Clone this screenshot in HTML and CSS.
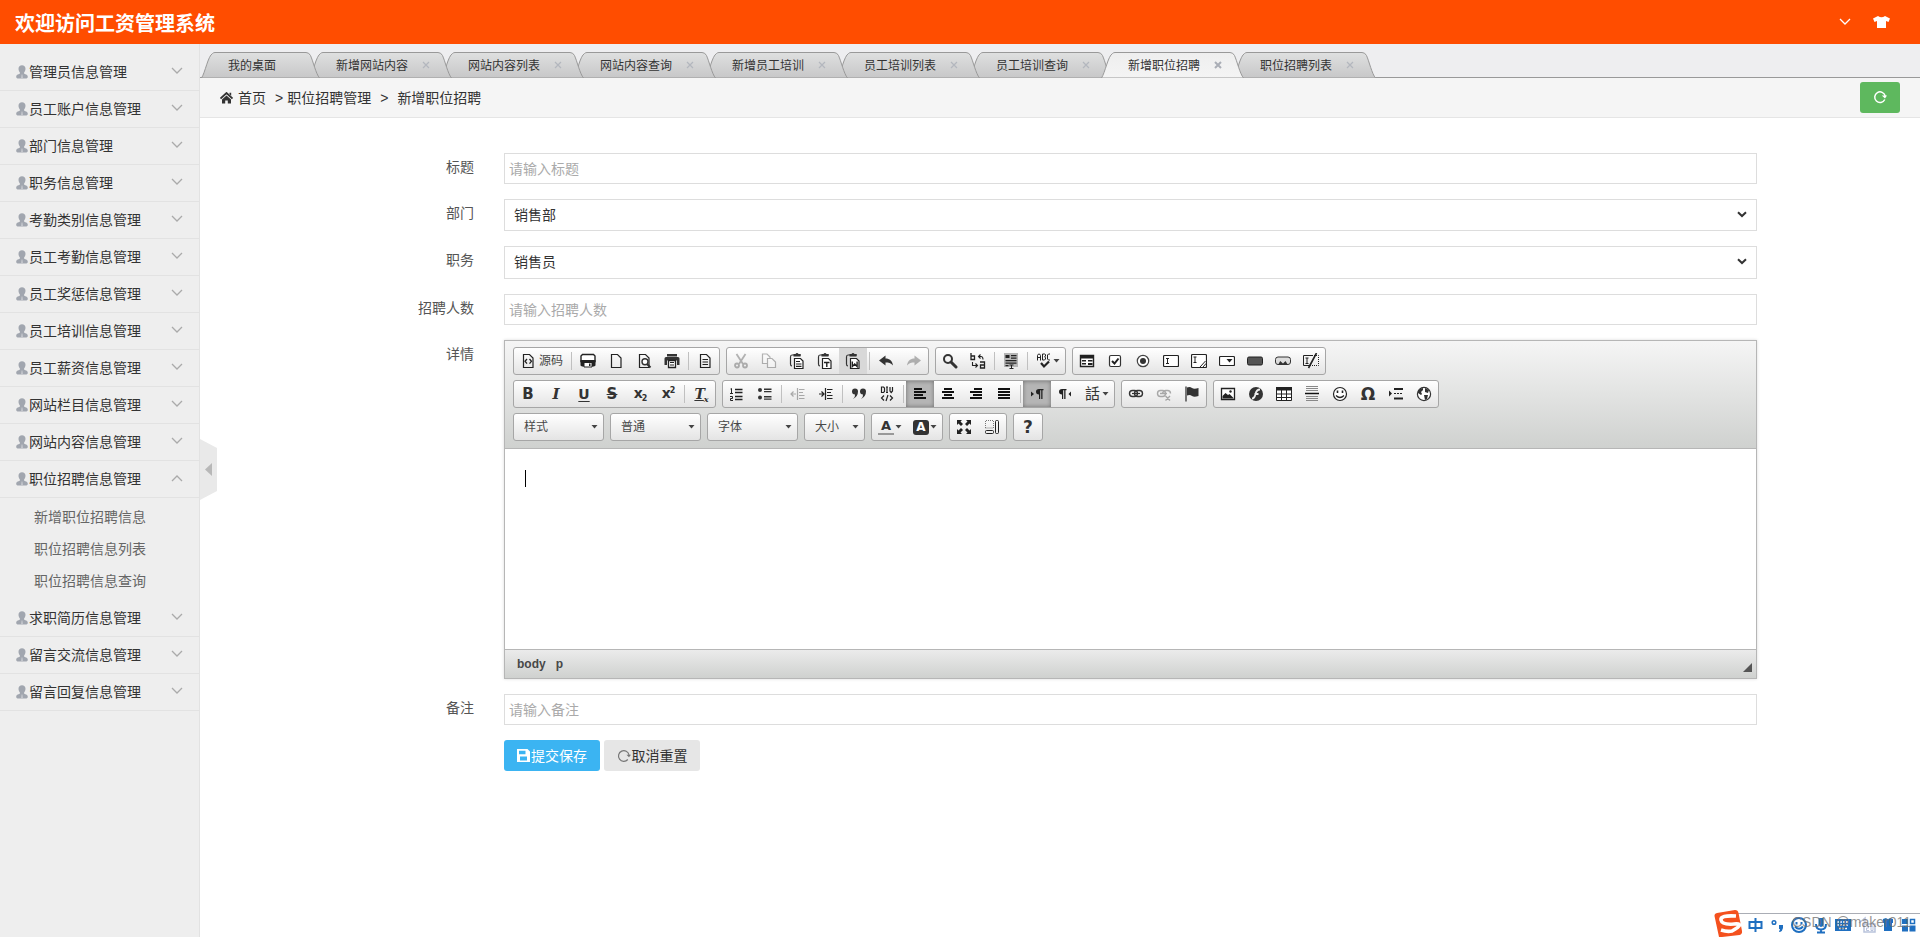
FILE: index.html
```html
<!DOCTYPE html>
<html lang="zh-CN">
<head>
<meta charset="utf-8">
<title>工资管理系统</title>
<link rel="stylesheet" href="styles.css">
</head>
<body>
<svg class="sprite" width="0" height="0">
  <symbol id="user" viewBox="0 0 12 14"><path d="M6 0.3c2.100 0 3.500 1.400 3.500 3.500 0 1.500-.6 2.800-1.400 3.600v1.200c.4.6 3.700.8 3.700 3.200 0 1-.5 1.400-1.400 1.600H1.600C.7 13.200.2 12.800.2 11.800c0-2.400 3.300-2.600 3.700-3.200V7.400C3.100 6.600 2.500 5.300 2.500 3.800 2.500 1.700 3.900.3 6 .3z" fill="#a1a6af"/><path d="M5.500 9.500h1l.5 3.500H5z" fill="#c3c6cc"/></symbol>
  <symbol id="down" viewBox="0 0 12 8"><path d="M1 1l5 5 5-5" fill="none" stroke="currentColor" stroke-width="1.300"/></symbol>
  <symbol id="up" viewBox="0 0 12 8"><path d="M1 7l5-5 5 5" fill="none" stroke="currentColor" stroke-width="1.300"/></symbol>
  <symbol id="tab" viewBox="0 0 143 26"><path d="M.5 26C4 21 7 4 11.500 1.500Q12.500.5 14 .5H129Q132 .5 133.500 3.500C136 9 139 22 142.500 26z" stroke="#999"/></symbol>
  <symbol id="caret" viewBox="0 0 7 4"><path d="M.5 0h6l-3 3.500z" fill="#444"/></symbol>
  <symbol id="page" viewBox="0 0 16 16"><path d="M3.500 1.500h6l3.500 3.500v9.500H3.500z" fill="none" stroke="#222" stroke-width="1.200"/></symbol>
  <symbol id="clip" viewBox="0 0 16 16"><path d="M5 2H3Q1.500 2 1.500 4V11q0 2 1.500 2M11 2h1" fill="none" stroke="#333" stroke-width="1.200"/><path d="M4.500 1h2q.5-1 1.500-1t1.500 1h2v2.500h-7z" fill="#333"/><path d="M5.500 5.500h6l2.500 2.500v7.500H5.500z" fill="#fff" stroke="#222" stroke-width="1.200"/></symbol>
  <symbol id="select-arrow" viewBox="0 0 10 7"><path d="M1 1.200l4 3.800 4-3.800" fill="none" stroke="#333" stroke-width="2"/></symbol>
  <linearGradient id="tab-fill" x1="0" y1="0" x2="0" y2="1"><stop offset="0" stop-color="#dfe0e0"/><stop offset="1" stop-color="#c7c7c8"/></linearGradient>
  <linearGradient id="tab-on" x1="0" y1="0" x2="0" y2="1"><stop offset="0" stop-color="#eee"/><stop offset="1" stop-color="#f4f4f4"/></linearGradient>
</svg>

<header class="header">
  <h1 class="brand">欢迎访问工资管理系统</h1>
  <div class="header-tools">
    <svg width="12" height="8"><use href="#down"/></svg>
    <svg width="17" height="12" viewBox="0 0 17 12"><path d="M5 0Q8.500 2.500 12 0L17 2.500 15.500 6 13 5V12H4V5L1.500 6 0 2.500z" fill="#fff"/></svg>
  </div>
</header>

<div class="shell">
  <nav class="sidebar">
    <a class="menu"><svg class="who"><use href="#user"/></svg><span>管理员信息管理</span><svg class="chev"><use href="#down"/></svg></a>
    <a class="menu"><svg class="who"><use href="#user"/></svg><span>员工账户信息管理</span><svg class="chev"><use href="#down"/></svg></a>
    <a class="menu"><svg class="who"><use href="#user"/></svg><span>部门信息管理</span><svg class="chev"><use href="#down"/></svg></a>
    <a class="menu"><svg class="who"><use href="#user"/></svg><span>职务信息管理</span><svg class="chev"><use href="#down"/></svg></a>
    <a class="menu"><svg class="who"><use href="#user"/></svg><span>考勤类别信息管理</span><svg class="chev"><use href="#down"/></svg></a>
    <a class="menu"><svg class="who"><use href="#user"/></svg><span>员工考勤信息管理</span><svg class="chev"><use href="#down"/></svg></a>
    <a class="menu"><svg class="who"><use href="#user"/></svg><span>员工奖惩信息管理</span><svg class="chev"><use href="#down"/></svg></a>
    <a class="menu"><svg class="who"><use href="#user"/></svg><span>员工培训信息管理</span><svg class="chev"><use href="#down"/></svg></a>
    <a class="menu"><svg class="who"><use href="#user"/></svg><span>员工薪资信息管理</span><svg class="chev"><use href="#down"/></svg></a>
    <a class="menu"><svg class="who"><use href="#user"/></svg><span>网站栏目信息管理</span><svg class="chev"><use href="#down"/></svg></a>
    <a class="menu"><svg class="who"><use href="#user"/></svg><span>网站内容信息管理</span><svg class="chev"><use href="#down"/></svg></a>
    <a class="menu"><svg class="who"><use href="#user"/></svg><span>职位招聘信息管理</span><svg class="chev"><use href="#up"/></svg></a>
    <div class="submenu">
      <a>新增职位招聘信息</a>
      <a>职位招聘信息列表</a>
      <a>职位招聘信息查询</a>
    </div>
    <a class="menu"><svg class="who"><use href="#user"/></svg><span>求职简历信息管理</span><svg class="chev"><use href="#down"/></svg></a>
    <a class="menu"><svg class="who"><use href="#user"/></svg><span>留言交流信息管理</span><svg class="chev"><use href="#down"/></svg></a>
    <a class="menu"><svg class="who"><use href="#user"/></svg><span>留言回复信息管理</span><svg class="chev"><use href="#down"/></svg></a>
    <svg class="collapse" width="17" height="62" viewBox="0 0 17 62"><path d="M0 0l17 9v43L0 61z" fill="#e9e9e9"/><path d="M12 24v13l-7-6.500z" fill="#b8b8b8"/></svg>
  </nav>

  <main class="main">
    <div class="tabs">
      <div class="tab first"><svg class="shape" viewBox="0 0 119 26"><path d="M.5 26C4 21 7 4 11.500 1.500Q12.500.5 14 .5H105Q108 .5 109.500 3.500C112 9 115 22 118.500 26z" stroke="#999"/></svg><span>我的桌面</span></div>
      <div class="tab"><svg class="shape"><use href="#tab"/></svg><span>新增网站内容</span><svg class="close" viewBox="0 0 8 8"><path d="M1 1l6 6M7 1L1 7"/></svg></div>
      <div class="tab"><svg class="shape"><use href="#tab"/></svg><span>网站内容列表</span><svg class="close" viewBox="0 0 8 8"><path d="M1 1l6 6M7 1L1 7"/></svg></div>
      <div class="tab"><svg class="shape"><use href="#tab"/></svg><span>网站内容查询</span><svg class="close" viewBox="0 0 8 8"><path d="M1 1l6 6M7 1L1 7"/></svg></div>
      <div class="tab"><svg class="shape"><use href="#tab"/></svg><span>新增员工培训</span><svg class="close" viewBox="0 0 8 8"><path d="M1 1l6 6M7 1L1 7"/></svg></div>
      <div class="tab"><svg class="shape"><use href="#tab"/></svg><span>员工培训列表</span><svg class="close" viewBox="0 0 8 8"><path d="M1 1l6 6M7 1L1 7"/></svg></div>
      <div class="tab"><svg class="shape"><use href="#tab"/></svg><span>员工培训查询</span><svg class="close" viewBox="0 0 8 8"><path d="M1 1l6 6M7 1L1 7"/></svg></div>
      <div class="tab active"><svg class="shape"><use href="#tab"/></svg><span>新增职位招聘</span><svg class="close" viewBox="0 0 8 8"><path d="M1 1l6 6M7 1L1 7"/></svg></div>
      <div class="tab"><svg class="shape"><use href="#tab"/></svg><span>职位招聘列表</span><svg class="close" viewBox="0 0 8 8"><path d="M1 1l6 6M7 1L1 7"/></svg></div>
    </div>

    <div class="crumbs">
      <svg width="13" height="12" viewBox="0 0 13 12"><path d="M.5 6.500L6.500 1l6 5.500" fill="none" stroke="#333" stroke-width="1.800"/><path d="M6.500 3.500L2 7.500V11.500H5.200V8.500h2.600v3H11V7.500z" fill="#333"/><path d="M9.500.8h1.700v3L9.500 2.300z" fill="#333"/></svg>
      <span class="c1">首页</span><span class="gt g1">&gt;</span><span>职位招聘管理</span><span class="gt g2">&gt;</span><span>新增职位招聘</span>
      <button class="refresh"><svg width="14" height="14" viewBox="0 0 14 14"><path d="M11.800 9.500A5.300 5.300 0 1 1 12.200 6" fill="none" stroke="#fff" stroke-width="1.500"/><path d="M8.800 5.500H14L12 8.500z" fill="#fff"/></svg></button>
    </div>

    <form class="form">
      <label>标题</label><input class="field" placeholder="请输入标题">
      <label>部门</label><div class="field choose"><span>销售部</span><svg width="10" height="7"><use href="#select-arrow"/></svg></div>
      <label>职务</label><div class="field choose tall"><span>销售员</span><svg width="10" height="7"><use href="#select-arrow"/></svg></div>
      <label>招聘人数</label><input class="field" placeholder="请输入招聘人数">
      <label>详情</label>
      <div class="editor">
        <div class="toolbar">
          <div class="row">
            <div class="group">
              <a class="btn source"><svg viewBox="0 0 16 16"><use href="#page"/><path d="M7 6L5 8.300 7 10.600M9.500 6l2 2.300-2 2.300" fill="none" stroke="#222" stroke-width="1.300"/></svg><span>源码</span></a><i class="sep"></i>
              <a class="btn"><svg viewBox="0 0 16 16"><path d="M2.500 1.500h11l1.500 1.500V8.500H1V3z" fill="#fff" stroke="#222" stroke-width="1.400"/><path d="M.5 7h15v5.500l-1.500 1H2l-1.500-1z" fill="#222"/><path d="M4 9.500h8v4.500H4z" fill="#fff" stroke="#222"/><path d="M9 10.500h1.500v2.500H9z" fill="#222"/></svg></a>
              <a class="btn"><svg viewBox="0 0 16 16"><use href="#page"/></svg></a>
              <a class="btn"><svg viewBox="0 0 16 16"><use href="#page"/><circle cx="9" cy="8.800" r="3" fill="#fff" stroke="#333" stroke-width="1.400"/><path d="M11 11l3.500 3.500" stroke="#333" stroke-width="2"/></svg></a>
              <a class="btn"><svg viewBox="0 0 16 16"><path d="M3 1h10v2.500H3zM2 4h12q1.500 0 1.500 1.500V12H13V7.500H3V12H.5V5.500Q.5 4 2 4z" fill="#333"/><path d="M4.500 7.500h7v7h-7z" fill="#fff" stroke="#222" stroke-width="1.300"/><path d="M6 9.500h4M6 12h4" stroke="#222"/></svg></a><i class="sep"></i>
              <a class="btn"><svg viewBox="0 0 16 16"><use href="#page"/><path d="M5.500 6.500H11M5.500 9H11M5.500 11.500H11" stroke="#222" stroke-width="1.200"/></svg></a>
            </div>
            <div class="group">
              <a class="btn off"><svg viewBox="0 0 16 16" fill="none" stroke="#333" stroke-width="1.800"><path d="M3.500 1l6.500 10M12.500 1L6 11"/><circle cx="4" cy="12.500" r="2"/><circle cx="12" cy="12.500" r="2"/></svg></a>
              <a class="btn off"><svg viewBox="0 0 16 16" fill="#fff" stroke="#333" stroke-width="1.200"><path d="M1.500 1H6l3 3v6.500H1.500z"/><path d="M6.500 5.500H11l3.500 3.500v5.500h-8z"/></svg></a>
              <a class="btn"><svg viewBox="0 0 16 16"><use href="#clip"/><path d="M7 8.500h4M7 11h5.500M7 13.300h5.500" stroke="#222" stroke-width="1.200"/></svg></a>
              <a class="btn"><svg viewBox="0 0 16 16"><use href="#clip"/><path d="M7 9.500h5.500M9.800 9.500V14" stroke="#222" stroke-width="1.400"/></svg></a>
              <a class="btn hover"><svg viewBox="0 0 16 16"><use href="#clip"/><path d="M7.300 8.500v5l2.400-2.500 2.400 2.500v-5" fill="none" stroke="#222" stroke-width="1.400"/></svg></a><i class="sep"></i>
              <a class="btn"><svg viewBox="0 0 16 16"><path d="M1 7.500L7.500 2.500V5.500c4 0 7 2.500 7.500 7C13 10 10.500 9.500 7.500 9.500v3z" fill="#333"/></svg></a>
              <a class="btn off"><svg viewBox="0 0 16 16"><path d="M15 7.500L8.500 2.500V5.500c-4 0-7 2.500-7.500 7C3 10 5.500 9.500 8.500 9.500v3z" fill="#333"/></svg></a>
            </div>
            <div class="group">
              <a class="btn"><svg viewBox="0 0 16 16"><circle cx="6" cy="6" r="4" fill="none" stroke="#333" stroke-width="2"/><path d="M9 9l5 5" stroke="#333" stroke-width="3" stroke-linecap="round"/></svg></a>
              <a class="btn"><svg viewBox="0 0 16 16" fill="none" stroke="#222" stroke-width="1.300"><path d="M1 0v6.500H4.500V3H1M10 9h4.500v6H10.500v-3h4"/><path d="M8.500 3.500h2.500q2 0 2 3M10.500 1.500L8.500 3.500l2 2M2.500 9v3.500H7M5.500 10.500l2 2-2 2" stroke-width="1.100"/></svg></a><i class="sep"></i>
              <a class="btn"><svg viewBox="0 0 16 16"><path d="M1 0h14v14H1z" fill="#b5b5b5"/><path d="M2.500 2h4v3h-4zM8 2h5.500v1.200H8zM8 4.500h5.500v1.200H8zM2.500 7h11v1.200h-11zM2.500 9.500h11v1.200h-11zM2.500 12h3v1.200h-3z" fill="#222"/><path d="M8.500 12v3.500M6.500 12h4M6.500 15.500h4" stroke="#222"/></svg></a><i class="sep"></i>
              <a class="btn wide"><svg viewBox="0 0 16 16" fill="none" stroke="#222"><path d="M1.500 7.500v-5l1-1.500h1l1 1.500v5M1.500 4.500h3M6.500 1v6h2l1-1V4.500L8.500 4l1-1V1.500L8.500 1zM14 1h-1.500l-1 1v4l1 1H14"/><path d="M5 10l3 3.500L13 8.500" stroke-width="2.200"/></svg><svg class="caret"><use href="#caret"/></svg></a>
            </div>
            <div class="group">
              <a class="btn"><svg viewBox="0 0 16 16"><path d="M1.500 2.500h13v11h-13z" fill="#fff" stroke="#222" stroke-width="1.400"/><path d="M1 2h14v3.500H1zM3 7h4v1.500H3zM3 10h4v1.500H3zM9 7h4.500v1.500H9zM9 10h4.500v2H9z" fill="#222"/></svg></a>
              <a class="btn"><svg viewBox="0 0 16 16"><rect x="2.500" y="2.500" width="11" height="11" rx="1.500" fill="#fff" stroke="#333" stroke-width="1.200"/><path d="M5 8l2.500 2.500L11.500 5.500" fill="none" stroke="#222" stroke-width="2"/></svg></a>
              <a class="btn"><svg viewBox="0 0 16 16"><circle cx="8" cy="8" r="5.700" fill="#fff" stroke="#444" stroke-width="1.200"/><circle cx="8" cy="8" r="3" fill="#333"/></svg></a>
              <a class="btn"><svg viewBox="0 0 16 16"><rect x=".5" y="2.500" width="15" height="11" rx="1" fill="#fff" stroke="#222" stroke-width="1.200"/><path d="M3 5.500h3M4.500 5.500v5M3 10.500h3" stroke="#222"/></svg></a>
              <a class="btn"><svg viewBox="0 0 16 16"><rect x=".5" y="1.500" width="15" height="13" rx="1" fill="#fff" stroke="#222" stroke-width="1.200"/><path d="M2.500 4h3M4 4v5.500M2.500 9.500h3M9 14l5.500-6M12 14l3-3.500" stroke="#222"/></svg></a>
              <a class="btn"><svg viewBox="0 0 16 16"><rect x=".5" y="3.500" width="15" height="9" rx="1" fill="#fff" stroke="#222" stroke-width="1.200"/><path d="M7.500 6h6l-3 3.500z" fill="#222"/></svg></a>
              <a class="btn"><svg viewBox="0 0 16 16"><rect x=".5" y="4" width="15" height="8" rx="1.500" fill="#555" stroke="#222"/></svg></a>
              <a class="btn"><svg viewBox="0 0 16 16"><rect x=".5" y="4" width="15" height="7.500" rx="2.500" fill="#ddd" stroke="#333"/><path d="M3 12l2.200-4L8 10.500 10.500 8l2.500 4z" fill="#333"/></svg></a>
              <a class="btn"><svg viewBox="0 0 16 16" fill="none" stroke="#222"><path d="M9 2.500H.5v10H7"/><path d="M9 2.500h6.500v10H7" stroke-dasharray="1 1"/><path d="M2.500 5h3M4 5v5.500M2.500 10.500h3"/><path d="M13.500 0L5.500 15" stroke-width="1.600"/></svg></a>
            </div>
          </div>
          <div class="row">
            <div class="group">
              <a class="btn"><b class="glyph">B</b></a><a class="btn"><b class="glyph ital">I</b></a><a class="btn"><b class="glyph under">U</b></a><a class="btn"><b class="glyph strike">S</b></a>
              <a class="btn"><b class="glyph x">x<small class="low">2</small></b></a><a class="btn"><b class="glyph x">x<small class="high">2</small></b></a><i class="sep"></i>
              <a class="btn"><b class="glyph ital tx">T<small class="low">x</small></b></a>
            </div>
            <div class="group">
              <a class="btn"><svg viewBox="0 0 16 16" fill="none" stroke="#222"><path d="M1.500 3l1-.5v5M1 7.500h3M1 10.500h2.500v2H1.500v2H4"/><path d="M6 3.500h7.500M6 6.500h7.500M6 10.500h7.500M6 13.500h7.500" stroke-width="1.400"/></svg></a>
              <a class="btn"><svg viewBox="0 0 16 16" fill="#333"><circle cx="3" cy="4" r="2"/><circle cx="3" cy="11.500" r="2"/><path d="M7 2.500h7.500V4H7zM7 5h7.500v1.200H7zM7 10h7.500v1.400H7zM7 12.500h7.500v1.200H7z"/></svg></a><i class="sep"></i>
              <a class="btn off"><svg viewBox="0 0 16 16" fill="none" stroke="#222"><path d="M7.500 2v12M9 3.500h5.500M9 6.500h4M9 9.500h5.500M9 12.500h5.500M1 8h5M3.500 5.500L1 8l2.500 2.500" stroke-width="1.200"/></svg></a>
              <a class="btn"><svg viewBox="0 0 16 16" fill="none" stroke="#222"><path d="M7.500 2v12M9 3.500h5.500M9 6.500h4M9 9.500h5.500M9 12.500h5.500M1 8h5M3.500 5.500L6 8 3.500 10.500" stroke-width="1.200"/></svg></a><i class="sep"></i>
              <a class="btn"><svg viewBox="0 0 16 16" fill="#333"><path d="M1 5.500a3 3 0 0 1 6 0q0 5-5 7.500Q4.500 10.500 4 8.500 1 8.500 1 5.500zM9 5.500a3 3 0 0 1 6 0q0 5-5 7.500 2.500-2.500 2-4.500-3 0-3-3z"/></svg></a>
              <a class="btn"><svg viewBox="0 0 16 16" fill="none" stroke="#222" stroke-width="1.200"><path d="M2.500 1v5.500h2l1-1v-3.500l-1-1zM7 1h2M8 1v5.500M7 6.500h2M11 1v4l1.200 1.500L13.500 5V1M5 9.500L2.500 12 5 14.500M11 9.500l2.500 2.500-2.500 2.500M9 9L7 15"/></svg></a><i class="sep"></i>
              <a class="btn on"><svg viewBox="0 0 16 16"><path d="M2 3h8M2 6h12M2 9h9M2 12h12" stroke="#111" stroke-width="2"/></svg></a>
              <a class="btn"><svg viewBox="0 0 16 16"><path d="M4 3h8M2 6h12M4 9h8M2 12h12" stroke="#111" stroke-width="2"/></svg></a>
              <a class="btn"><svg viewBox="0 0 16 16"><path d="M6 3h8M2 6h12M5 9h9M2 12h12" stroke="#111" stroke-width="2"/></svg></a>
              <a class="btn"><svg viewBox="0 0 16 16"><path d="M2 3h12M2 6h12M2 9h12M2 12h12" stroke="#111" stroke-width="2"/></svg></a><i class="sep"></i>
              <a class="btn on"><svg viewBox="0 0 16 16"><path d="M2 5.500v5l3-2.500zM10 3h4.500v1.200h-1V13h-1.300V4.200h-1V13H10V8.500Q7 8.500 7 5.800T10 3z" fill="#222"/></svg></a>
              <a class="btn"><svg viewBox="0 0 16 16"><path d="M14 5.500v5L11.500 8zM5 3h4.500v1.200h-1V13H7.200V4.200h-1V13H5V8.500Q2 8.500 2 5.800T5 3z" fill="#222"/></svg></a>
              <a class="btn wide"><span class="lang">話</span><svg class="caret"><use href="#caret"/></svg></a>
            </div>
            <div class="group">
              <a class="btn"><svg viewBox="0 0 16 16" fill="none" stroke="#333" stroke-width="1.400"><rect x="1.500" y="4.500" width="8" height="6" rx="3"/><rect x="6.500" y="4.500" width="8" height="6" rx="3"/><path d="M4 7.500h8" stroke-width="1.200"/></svg></a>
              <a class="btn off"><svg viewBox="0 0 16 16" fill="none" stroke="#222" stroke-width="1.400"><rect x="1.500" y="4.500" width="8" height="6" rx="3"/><path d="M6.500 7q1-2.500 3-2.500h2a3 3 0 0 1 3 3M4 7.500h7M9.500 10l4.500 4.500M14 10l-4.500 4.500"/></svg></a>
              <a class="btn"><svg viewBox="0 0 16 16"><path d="M2 .5v15" stroke="#333" stroke-width="1.300"/><path d="M3 1.500q3-1 5 .5t6.500 0v8q-4.500 1.500-6.500 0t-5-.5z" fill="#333"/></svg></a>
            </div>
            <div class="group">
              <a class="btn"><svg viewBox="0 0 16 16"><path d="M1.500 2.500h13v11h-13z" fill="#fff" stroke="#222" stroke-width="1.300"/><path d="M2.500 12.500V10l3-3 2.500 2 1.500-1 4 4v.5z" fill="#222"/><circle cx="10.500" cy="5.500" r="1.200" fill="#222"/></svg></a>
              <a class="btn"><svg viewBox="0 0 16 16"><circle cx="8" cy="8" r="7" fill="#333"/><path d="M12 3.500Q8.500 3.500 7.500 8T4 12.500M6.500 8h4" fill="none" stroke="#eee" stroke-width="1.800"/></svg></a>
              <a class="btn"><svg viewBox="0 0 16 16"><path d="M.5 1.500h15v13H.5z" fill="#fff" stroke="#222"/><path d="M0 1h16v3.500H0z" fill="#222"/><path d="M5.500 4v10.500M10.500 4v10.500M.5 8h15M.5 11.500h15" stroke="#222"/></svg></a>
              <a class="btn"><svg viewBox="0 0 16 16"><path d="M2 .5h12M2 2.500h12M2 4.500h12M2 10.500h12M2 12.500h12M2 14.500h12" stroke="#888"/><path d="M1 7.500h14" stroke="#111" stroke-width="1.500"/></svg></a>
              <a class="btn"><svg viewBox="0 0 16 16"><circle cx="8" cy="8" r="6.500" fill="#fff" stroke="#222" stroke-width="1.200"/><path d="M5.500 4.500v2.500M10.500 4.500v2.500" stroke="#222" stroke-width="1.600"/><path d="M4 9.500q4 4 8 0" fill="none" stroke="#222" stroke-width="1.200"/></svg></a>
              <a class="btn"><b class="glyph omega">Ω</b></a>
              <a class="btn"><svg viewBox="0 0 16 16"><path d="M1 4.500v6L4 7.500z" fill="#222"/><path d="M6 3h9M6 12.500h9" stroke="#222" stroke-width="2"/><path d="M6 7.500h9" stroke="#222" stroke-dasharray="2 1"/></svg></a>
              <a class="btn"><svg viewBox="0 0 16 16"><circle cx="8" cy="8" r="6.600" fill="#fff" stroke="#333" stroke-width="1.200"/><path d="M2 5Q4 2 7 2v2L5 6l1 2-1 1-3-2zM9 2l4 2-1 3-3-1zM8 9l4 0-1 4-2 1z" fill="#333"/></svg></a>
            </div>
          </div>
          <div class="row">
            <a class="combo"><span>样式</span><svg class="caret"><use href="#caret"/></svg></a>
            <a class="combo"><span>普通</span><svg class="caret"><use href="#caret"/></svg></a>
            <a class="combo"><span>字体</span><svg class="caret"><use href="#caret"/></svg></a>
            <a class="combo short"><span>大小</span><svg class="caret"><use href="#caret"/></svg></a>
            <div class="group">
              <a class="btn wide"><b class="glyph tint">A</b><svg class="caret"><use href="#caret"/></svg></a>
              <a class="btn wide"><b class="glyph paint">A</b><svg class="caret"><use href="#caret"/></svg></a>
            </div>
            <div class="group">
              <a class="btn"><svg viewBox="0 0 16 16"><path d="M1 1h5L4.500 2.500 7 5 5 7 2.500 4.500 1 6zM15 1v5l-1.500-1.500L11 7 9 5l2.500-2.500L10 1zM1 15v-5l1.500 1.500L5 9l2 2-2.500 2.500L6 15zM15 15h-5l1.500-1.500L9 11l2-2 2.500 2.500L15 10z" fill="#222"/></svg></a>
              <a class="btn"><svg viewBox="0 0 16 16" fill="none" stroke="#222"><path d="M1.500 9V1.500h8V9z" stroke="#777" stroke-dasharray="1 1"/><rect x="1.500" y="11.500" width="8" height="3" rx="1"/><rect x="11.500" y="1.500" width="3" height="13" rx="1"/></svg></a>
            </div>
            <div class="group"><a class="btn"><b class="glyph ask">?</b></a></div>
          </div>
        </div>
        <div class="canvas"><i class="cursor"></i></div>
        <div class="status"><span>body</span><span>p</span><svg class="grip" width="9" height="9"><path d="M9 0v9H0z" fill="#555"/></svg></div>
      </div>
      <label>备注</label><input class="field" placeholder="请输入备注">
      <div class="actions">
        <button type="button" class="save"><svg width="13" height="13" viewBox="0 0 13 13"><path d="M0 0h10.500L13 2.500V13H0zM2 1.700v3.600h6.500V1.700zM3 7.500v4h7v-4z" fill="#fff" fill-rule="evenodd"/></svg>提交保存</button>
        <button type="button" class="reset"><svg width="14" height="14" viewBox="0 0 14 14"><path d="M10.800 10.500A5.300 5.300 0 1 1 12 6" fill="none" stroke="#777" stroke-width="1.200"/><path d="M9.500 5.800H14L12 8.300z" fill="#777"/></svg>取消重置</button>
      </div>
    </form>
  </main>
</div>

<div class="ime">
  <svg width="206" height="27" viewBox="0 0 206 27">
    <path d="M20 3.500H206V27H24z" fill="#fff"/><path d="M22 3.500H206" stroke="#aaadb5"/>
    <path d="M3 3L21 0q3 0 3.500 3L28 21q.5 3-2.500 4L8 27H5L.5 6Q.3 3.500 3 3z" fill="#f4511e"/>
    <path d="M22 6Q6 5 7 10t13 4-2 7q-5 1-11-1" fill="none" stroke="#fff" stroke-width="3.600"/>
    <g fill="none" stroke="#1f6fc0" stroke-width="2"><path d="M35.500 12h12v6h-12zM41.500 8v14"/><circle cx="60" cy="12.500" r="1.800" stroke-width="1.500"/><circle cx="85" cy="15" r="7"/><path d="M82.500 12v2.500M87.500 12v2.500M81 16.500q4 4.500 8 0M102 14q0 5.500 5 5.500t5-5.500M107 19v4M103 22.500h8"/></g>
    <path d="M65 15h4v3q-.5 3-3 4h-1l1-3h-1zM104.500 8h5v7q-2.500 4-5 0zM121 9h16v12h-16zM169 9l3-1q2 2 4 0l3 1v4h-1v8h-8v-8h-1zM188 9h6v5h-6zM188 15.500h6v6h-6zM195.500 15.500h6v6h-6z" fill="#1f6fc0"/>
    <path d="M123 12h12M123 15h12M125 18.500h8" stroke="#fff" stroke-width="1.500" stroke-dasharray="2 1"/>
    <path d="M196.500 9.500h4v4h-4z" fill="#fff" stroke="#1f6fc0" stroke-width="1.500"/>
    <path d="M145 13l6-5v5M150 14h11v8h-11z" fill="#fff" stroke="#b9c3dc" stroke-width="1.500"/>
    <path d="M152.500 16h2v2h-2v2.500h2.500M157 16h2v4.500h-2z" fill="none" stroke="#b9c3dc"/>
  </svg>
  <span class="mark">CSDN @maker011</span>
</div>
</body>
</html>
```

FILE: styles.css
```css
* { box-sizing: border-box; }
body {
  margin: 0;
  height: 937px;
  overflow: hidden;
  display: flex;
  flex-direction: column;
  background: #fff;
  color: #333;
  font: 14px/20px "Liberation Sans", "Noto Sans CJK SC", sans-serif;
}
svg { display: block; flex: none; }
.sprite { position: absolute; }

.header {
  height: 44px;
  flex: none;
  background: #ff4d00;
  color: #fff;
  display: flex;
  align-items: center;
  justify-content: space-between;
  padding: 0 30px 0 15px;
}
.brand { margin: 0; font-size: 20px; line-height: 44px; padding-top: 3px; }
.header-tools { display: flex; align-items: center; gap: 22px; }

.shell { flex: 1; display: flex; min-height: 0; }
.sidebar {
  position: relative;
  width: 200px;
  flex: none;
  padding-top: 10px;
  background: #eee;
  border-right: 1px solid #e2e2e2;
}
.menu {
  height: 37px;
  display: flex;
  align-items: center;
  padding: 0 16px 0 16px;
  border-bottom: 1px solid #e2e2e2;
}
.menu span { flex: 1; margin-left: 1px; padding-bottom: 1px; }
.who { width: 12px; height: 14px; margin-top: -1px; }
.chev { width: 12px; height: 8px; color: #aaa; margin-top: -2px; }
.submenu { padding: 3px 0 3px 34px; color: #666; }
.submenu a { display: block; line-height: 32px; }
.collapse { position: absolute; left: 200px; top: 395px; }

.main { flex: 1; min-width: 0; }
.tabs {
  height: 34px;
  display: flex;
  align-items: flex-end;
  padding-left: 1px;
  background: linear-gradient(#999, #999) bottom / 100% 1px no-repeat #eeeef0;
}
.tab {
  width: 143px;
  height: 26px;
  margin-right: -11px;
  padding-left: 27px;
  display: grid;
  grid-template-columns: 86px 8px;
  grid-template-rows: 26px;
  align-items: center;
  font-size: 12px;
  white-space: nowrap;
  isolation: isolate;
}
.tab span { grid-area: 1 / 1; padding-top: 1px; }
.tab .close { grid-area: 1 / 2; }
.tab.first { width: 119px; }
.tab .shape {
  grid-area: 1 / 1;
  z-index: -1;
  width: 143px;
  height: 26px;
  margin-left: -27px;
  fill: url(#tab-fill);
}
.tab.first .shape { width: 119px; }
.tab:nth-child(1) { z-index: 9; }
.tab:nth-child(2) { z-index: 8; }
.tab:nth-child(3) { z-index: 7; }
.tab:nth-child(4) { z-index: 6; }
.tab:nth-child(5) { z-index: 5; }
.tab:nth-child(6) { z-index: 4; }
.tab:nth-child(7) { z-index: 3; }
.tab:nth-child(9) { z-index: 1; }
.tab.active { z-index: 10; }
.tab.active .shape { fill: url(#tab-on); }
.close { width: 8px; height: 8px; stroke: #b3b7be; stroke-width: 1.2; }
.active .close { stroke-width: 2; stroke: #aaaeb6; }

.crumbs {
  height: 40px;
  display: flex;
  align-items: center;
  padding: 0 20px;
  background: #f5f5f5;
  border-bottom: 1px solid #e5e5e5;
}
.c1 { margin-left: 5px; }
.g1 { margin: 0 4px 0 9px; }
.g2 { margin: 0 9px 0 9px; }
.refresh {
  margin: -1px 0 0 auto;
  width: 40px;
  height: 31px;
  border: 0;
  border-radius: 3px;
  background: #5eb85e;
  display: grid;
  place-items: center;
}

.form {
  display: grid;
  grid-template-columns: 274px 1253px;
  column-gap: 30px;
  row-gap: 15px;
  align-items: start;
  padding-top: 35px;
}
.form label { text-align: right; color: #555; line-height: 28px; }
.field {
  width: 100%;
  height: 31px;
  border: 1px solid #ddd;
  padding: 1px 4px 0;
  background: #fff;
  font: inherit;
}
.field::placeholder { color: #aaa; }
.choose {
  height: 32px;
  display: flex;
  align-items: center;
  justify-content: space-between;
  padding: 0 9px;
}
.choose.tall { height: 33px; padding-bottom: 1px; }
.choose svg { margin-top: -2px; }

.editor { height: 339px; border: 1px solid #b6b6b6; box-shadow: 0 0 3px rgba(0,0,0,.15); display: flex; flex-direction: column; }
.toolbar {
  height: 108px;
  display: flex;
  flex-direction: column;
  gap: 5px;
  padding: 6px 8px;
  background: linear-gradient(#f5f5f5, #cfd1cf);
  border-bottom: 1px solid #b6b6b6;
}
.row { display: flex; gap: 6px; height: 28px; }
.group, .combo {
  display: flex;
  height: 28px;
  border: 1px solid #a6a6a6;
  border-radius: 3px;
  background: linear-gradient(#fff, #e4e4e4);
}
.btn { width: 28px; height: 26px; padding: 5px 6px; display: flex; align-items: center; }
.btn > svg { width: 16px; height: 16px; }
.btn.source { width: 55px; font-size: 12px; color: #484848; }
.source span { margin-left: 3px; white-space: nowrap; }
.btn.wide { width: 35px; padding-right: 0; }
.btn .caret, .combo .caret { width: 7px; height: 4px; margin-left: 1px; }
.btn.off svg { opacity: .35; }
.btn.hover { background: #d8d8d8; }
.btn.on { background: #b5b5b5; box-shadow: inset 0 0 4px rgba(0,0,0,.4); }
.sep { width: 1px; height: 18px; margin: 4px 2px; background: #c0c0c0; }
.glyph { width: 16px; text-align: center; font: bold 15px/16px "DejaVu Sans", sans-serif; color: #333; white-space: nowrap; }
.glyph small { font-size: 8px; line-height: 0; }
.ital { font-family: "DejaVu Serif", serif; font-style: italic; }
.under { font-size: 14px; text-decoration: underline; text-underline-offset: 2px; }
.strike { text-decoration: line-through; }
.x { font-size: 14px; letter-spacing: -1px; margin-top: -2px; }
.low { position: relative; top: 3px; }
.high { position: relative; top: -5px; }
.tx { font-size: 14px; text-decoration: underline; letter-spacing: -1px; }
.omega { font-size: 17px; font-weight: bold; }
.lang { width: 16px; font-size: 15px; line-height: 16px; }
.tint { font-size: 13px; line-height: 14px; border-bottom: 2px solid #999; }
.paint { color: #fff; background: #333; border-radius: 3px; font-size: 12px; line-height: 15px; }
.ask { font-size: 17px; }
.combo { width: 91px; align-items: center; justify-content: space-between; padding: 0 5px 0 10px; font-size: 12px; color: #484848; }
.combo.short { width: 61px; }

.canvas { flex: 1; padding: 21px 20px; background: #fff; }
.cursor { display: block; width: 1px; height: 17px; background: #000; }
.status {
  height: 29px;
  display: flex;
  align-items: center;
  gap: 10px;
  padding: 0 4px 1px 12px;
  border-top: 1px solid #b6b6b6;
  background: linear-gradient(#ebebeb, #cfd1cf);
  color: #484848;
  font-size: 12px;
  font-weight: bold;
}
.grip { margin: 8px 0 0 auto; }

.actions { grid-column: 2; display: flex; gap: 4px; }
.actions button {
  width: 96px;
  height: 31px;
  border: 0;
  border-radius: 3px;
  padding: 0;
  display: flex;
  align-items: center;
  justify-content: center;
  gap: 1px;
  font: inherit;
}
.save { background: #3bb4f2; color: #fff; }
.reset { background: #e6e6e6; color: #333; }

.ime { position: absolute; right: 0; bottom: 0; }
.mark { position: absolute; left: 78px; top: 2px; font-size: 14px; color: rgba(110,110,110,.75); white-space: nowrap; }
```
